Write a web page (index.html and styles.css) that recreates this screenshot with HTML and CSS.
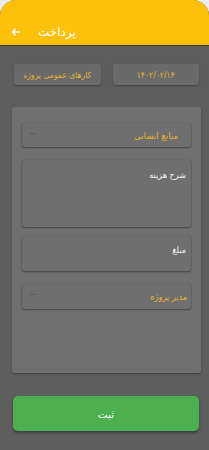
FILE: index.html
```html
<!DOCTYPE html>
<html lang="fa">
<head>
<meta charset="utf-8">
<link rel="stylesheet" href="styles.css">
</head>
<body>
<div class="screen">
  <header class="header">
    <svg class="back" width="9" height="8" viewBox="0 0 9 8"><path d="M8.5 4H1.2M4.2 1L1.2 4l3 3" fill="none" stroke="#fff" stroke-width="1.3" stroke-linecap="round" stroke-linejoin="round"/></svg>
    <span class="title">پرداخت</span>
  </header>
  <main class="content">
    <div class="chips">
      <div class="chip">کارهای عمومی پروژه</div>
      <div class="chip">۱۴۰۲/۰۲/۱۴</div>
    </div>
    <section class="panel">
      <div class="field select"><span class="caret"></span><span class="value">منابع انسانی</span></div>
      <div class="field textarea"><span class="label">شرح هزینه</span></div>
      <div class="field amount"><span class="label">مبلغ</span></div>
      <div class="field select small"><span class="caret"></span><span class="value">مدیر پروژه</span></div>
    </section>
    <button class="submit">ثبت</button>
  </main>
</div>
</body>
</html>
```
FILE: styles.css
```css
* { box-sizing: border-box; }
html, body { margin: 0; padding: 0; }
body {
  width: 209px;
  height: 450px;
  background: #ececec;
  font-family: "DejaVu Sans", "Noto Sans", sans-serif;
  overflow: hidden;
}
.screen {
  width: 209px;
  height: 450px;
  display: flex;
  flex-direction: column;
  background: #5e5e5e;
  border-radius: 16px 16px 0 0;
  overflow: hidden;
}
.header {
  height: 45px;
  flex: none;
  background: #fdc10c;
  display: flex;
  align-items: center;
  padding: 19px 0 0 11px;
  box-shadow: 0 1px 1px rgba(0,0,0,0.35);
  position: relative;
  z-index: 1;
}
.back { display: block; }
.title {
  color: #fff;
  font-size: 12px;
  margin-left: 18px;
}
.content {
  flex: 1;
  display: flex;
  flex-direction: column;
  padding: 19px 10px 0 13px;
}
.chips {
  display: flex;
  gap: 12px;
  padding-left: 1px;
}
.chip {
  flex: 1;
  height: 21px;
  background: #6a6a6a;
  border-radius: 3px;
  box-shadow: 0 1px 2px rgba(0,0,0,0.3);
  color: #e0b431;
  font-family: "DejaVu Sans Condensed", "DejaVu Sans", sans-serif;
  font-size: 8.5px;
  display: flex;
  align-items: center;
  justify-content: center;
  direction: rtl;
}
.panel {
  margin: 22px -2px 0 -1px;
  height: 266px;
  background: #707070;
  border-radius: 2px;
  box-shadow: 0 1px 2px rgba(0,0,0,0.35);
  padding: 16px 10px 0 10px;
  display: flex;
  flex-direction: column;
}
.field {
  background: #6f6f6f;
  border-radius: 3px;
  box-shadow: 0 1px 2px rgba(0,0,0,0.4), 0 0 1px rgba(0,0,0,0.25);
  display: flex;
  position: relative;
}
.select {
  height: 24px;
  align-items: center;
  justify-content: space-between;
  padding: 0 13px 0 8px;
}
.select.small { height: 25px; margin-top: 13px; padding-right: 4px; }
.value {
  color: #e6b42c;
  font-family: "DejaVu Sans Condensed", "DejaVu Sans", sans-serif;
  font-size: 9.5px;
  direction: rtl;
}
.small .value { font-size: 9px; }
.caret {
  width: 5px;
  height: 1px;
  background: #555;
  opacity: 0.8;
  margin-top: -4px;
}
.textarea {
  height: 67px;
  margin-top: 13px;
  justify-content: flex-end;
  padding: 9px 5px 0 0;
}
.amount {
  height: 35px;
  margin-top: 9px;
  justify-content: flex-end;
  padding: 8px 5px 0 0;
}
.label {
  color: #f2f2f2;
  font-family: "DejaVu Sans Condensed", "DejaVu Sans", sans-serif;
  font-size: 9px;
  direction: rtl;
  line-height: 12px;
}
.submit {
  margin: 23px 0 0 0;
  height: 35px;
  width: 186px;
  border: none;
  border-radius: 5px;
  background: #4caf50;
  color: #fff;
  font-family: "DejaVu Sans", sans-serif;
  font-size: 10.5px;
  box-shadow: 0 2px 3px rgba(0,0,0,0.35);
  padding: 0;
}
```
